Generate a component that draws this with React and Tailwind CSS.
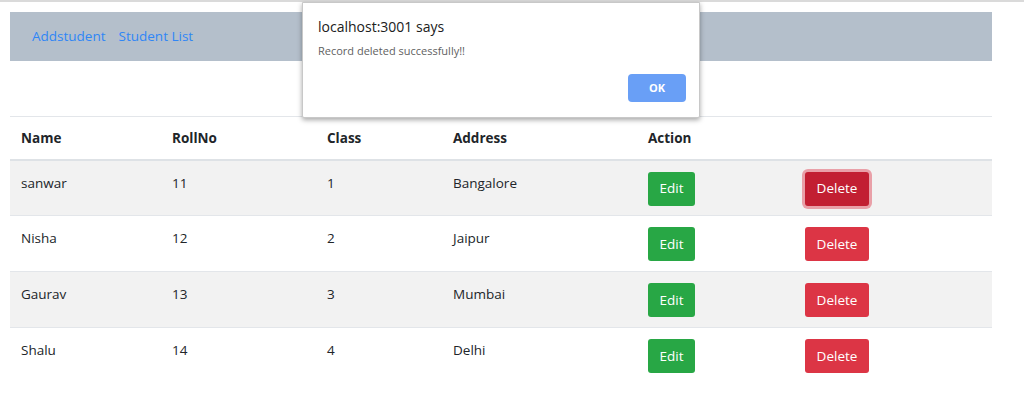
// App.jsx - student list with delete alert
import React from "react";

const students = [
  { name: "sanwar", roll: 11, cls: 1, address: "Bangalore" },
  { name: "Nisha", roll: 12, cls: 2, address: "Jaipur" },
  { name: "Gaurav", roll: 13, cls: 3, address: "Mumbai" },
  { name: "Shalu", roll: 14, cls: 4, address: "Delhi" },
];

export default function App() {
  return (
    <div
      className="relative min-h-[398px] bg-white border-t-2 border-[#dadada] pt-[10px] text-[#212529]"
      style={{ fontFamily: '"Open Sans", "Noto Sans", sans-serif' }}
    >
      {/* Navbar */}
      <div className="mx-[10px] w-[982px] h-[49px] bg-[#b4bfcb] flex items-center gap-[13px] px-[22px]">
        <a className="text-[#2f86f6] text-[13.5px]">Addstudent</a>
        <a className="text-[#2f86f6] text-[13.5px]">Student List</a>
      </div>

      {/* Table */}
      <div className="mx-[10px] w-[982px] mt-[55px]">
        <table className="w-full table-fixed border-collapse">
          <colgroup>
            <col className="w-[151px]" />
            <col className="w-[155px]" />
            <col className="w-[126px]" />
            <col className="w-[195px]" />
            <col className="w-[157px]" />
            <col className="w-[198px]" />
          </colgroup>
          <thead>
            <tr className="h-[43px] border-t border-[#e3e6ea] border-b-2 border-b-[#dee2e6]">
              <th className="text-left font-bold px-[11px] text-[13.5px]">Name</th>
              <th className="text-left font-bold px-[11px] text-[13.5px]">RollNo</th>
              <th className="text-left font-bold px-[11px] text-[13.5px]">Class</th>
              <th className="text-left font-bold px-[11px] text-[13.5px]">Address</th>
              <th className="text-left font-bold px-[11px] text-[13.5px]">Action</th>
              <th></th>
            </tr>
          </thead>
          <tbody>
            {students.map((s, i) => (
              <tr
                key={s.roll}
                className={`h-[56px] ${i < 3 ? "border-b border-[#e3e6ea]" : ""} ${i % 2 === 0 ? "bg-[#f2f2f2]" : "bg-white"}`}
              >
                <td className="align-top px-[11px] pt-[12px] text-[13.5px]">{s.name}</td>
                <td className="align-top px-[11px] pt-[12px] text-[13.5px]">{s.roll}</td>
                <td className="align-top px-[11px] pt-[12px] text-[13.5px]">{s.cls}</td>
                <td className="align-top px-[11px] pt-[12px] text-[13.5px]">{s.address}</td>
                <td className="align-top px-[11px] pt-[11px]">
                  <button className="h-[34px] w-[47px] rounded-[3px] bg-[#28a745] text-white text-[13.5px]">
                    Edit
                  </button>
                </td>
                <td className="align-top px-[11px] pt-[11px]">
                  {i === 0 ? (
                    <button className="h-[34px] w-[64px] rounded-[3px] bg-[#c21f32] text-white text-[13.5px] ring-[3px] ring-[#e9a0a8]">
                      Delete
                    </button>
                  ) : (
                    <button className="h-[34px] w-[64px] rounded-[3px] bg-[#dc3545] text-white text-[13.5px]">
                      Delete
                    </button>
                  )}
                </td>
              </tr>
            ))}
          </tbody>
        </table>
      </div>

      {/* Alert dialog */}
      <div className="absolute left-[302px] top-0 w-[398px] h-[116px] bg-white border border-[#c8c8c8] rounded-b-[2px] shadow-[0_2px_5px_rgba(0,0,0,0.35)] px-[15px] pt-[14px]">
        <div className="text-[14px] text-[#202020] leading-[20px]">localhost:3001 says</div>
        <div className="mt-[6px] text-[11px] text-[#5f5f5f] leading-[16px]">Record deleted successfully!!</div>
        <div className="flex justify-end mt-[15px]">
          <button className="w-[58px] h-[28px] rounded-[4px] bg-[#699ff6] text-white text-[11px] font-bold mr-[-2px]">
            OK
          </button>
        </div>
      </div>
    </div>
  );
}
